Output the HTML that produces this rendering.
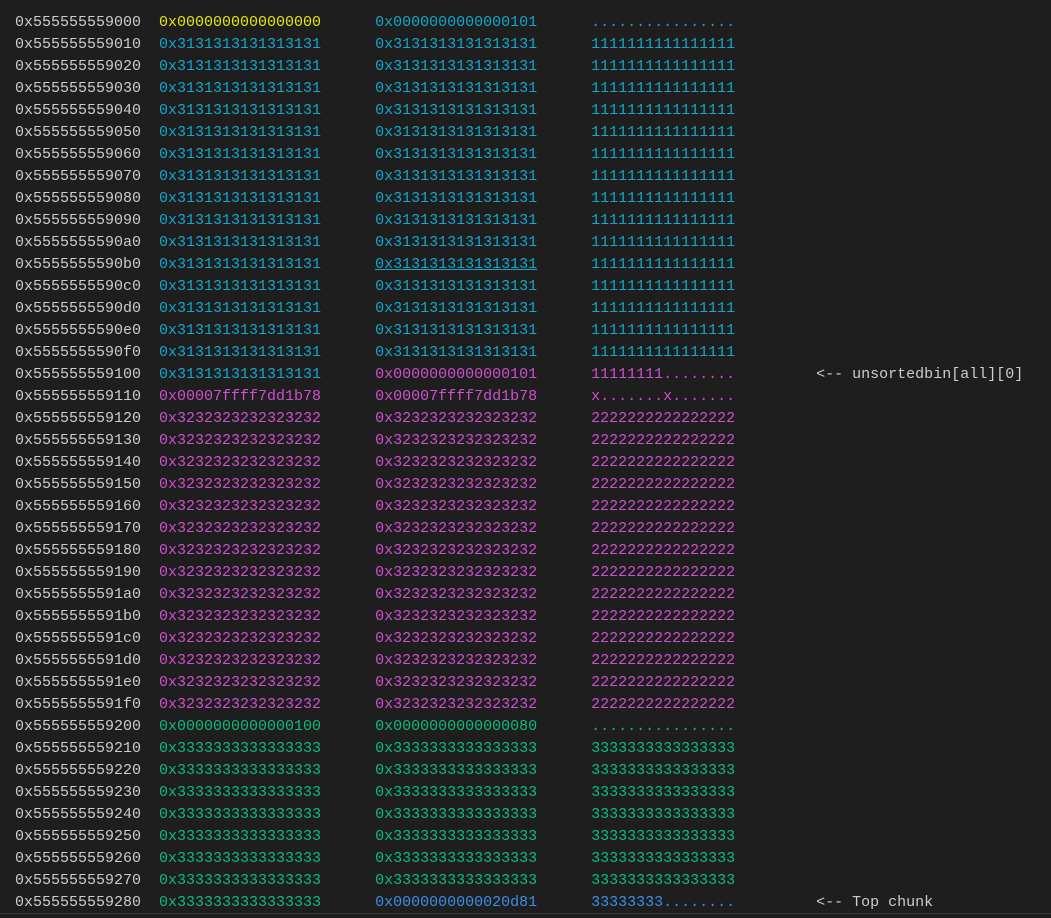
<!DOCTYPE html>
<html><head><meta charset="utf-8"><style>
html,body{margin:0;padding:0;background:#1e1e1e;width:1051px;height:918px;overflow:hidden}
pre{margin:0;position:absolute;left:15px;top:12px;font-family:"Liberation Mono",monospace;font-size:15px;line-height:22px;color:#cccccc;white-space:pre}
.y{color:#e5e510}.c{color:#11a8cd}.m{color:#d04fd0}.g{color:#0dbc79}.b{color:#3b8eea}.u{text-decoration:underline}
.line{position:absolute;left:0;top:913px;width:1051px;height:1px;background:#3a3a3a}
</style></head><body>
<pre>0x555555559000  <span class="y">0x0000000000000000</span>      <span class="c">0x0000000000000101</span>      <span class="c">................</span>
0x555555559010  <span class="c">0x3131313131313131</span>      <span class="c">0x3131313131313131</span>      <span class="c">1111111111111111</span>
0x555555559020  <span class="c">0x3131313131313131</span>      <span class="c">0x3131313131313131</span>      <span class="c">1111111111111111</span>
0x555555559030  <span class="c">0x3131313131313131</span>      <span class="c">0x3131313131313131</span>      <span class="c">1111111111111111</span>
0x555555559040  <span class="c">0x3131313131313131</span>      <span class="c">0x3131313131313131</span>      <span class="c">1111111111111111</span>
0x555555559050  <span class="c">0x3131313131313131</span>      <span class="c">0x3131313131313131</span>      <span class="c">1111111111111111</span>
0x555555559060  <span class="c">0x3131313131313131</span>      <span class="c">0x3131313131313131</span>      <span class="c">1111111111111111</span>
0x555555559070  <span class="c">0x3131313131313131</span>      <span class="c">0x3131313131313131</span>      <span class="c">1111111111111111</span>
0x555555559080  <span class="c">0x3131313131313131</span>      <span class="c">0x3131313131313131</span>      <span class="c">1111111111111111</span>
0x555555559090  <span class="c">0x3131313131313131</span>      <span class="c">0x3131313131313131</span>      <span class="c">1111111111111111</span>
0x5555555590a0  <span class="c">0x3131313131313131</span>      <span class="c">0x3131313131313131</span>      <span class="c">1111111111111111</span>
0x5555555590b0  <span class="c">0x3131313131313131</span>      <span class="c u">0x3131313131313131</span>      <span class="c">1111111111111111</span>
0x5555555590c0  <span class="c">0x3131313131313131</span>      <span class="c">0x3131313131313131</span>      <span class="c">1111111111111111</span>
0x5555555590d0  <span class="c">0x3131313131313131</span>      <span class="c">0x3131313131313131</span>      <span class="c">1111111111111111</span>
0x5555555590e0  <span class="c">0x3131313131313131</span>      <span class="c">0x3131313131313131</span>      <span class="c">1111111111111111</span>
0x5555555590f0  <span class="c">0x3131313131313131</span>      <span class="c">0x3131313131313131</span>      <span class="c">1111111111111111</span>
0x555555559100  <span class="c">0x3131313131313131</span>      <span class="m">0x0000000000000101</span>      <span class="m">11111111........</span>         &lt;-- unsortedbin[all][0]
0x555555559110  <span class="m">0x00007ffff7dd1b78</span>      <span class="m">0x00007ffff7dd1b78</span>      <span class="m">x.......x.......</span>
0x555555559120  <span class="m">0x3232323232323232</span>      <span class="m">0x3232323232323232</span>      <span class="m">2222222222222222</span>
0x555555559130  <span class="m">0x3232323232323232</span>      <span class="m">0x3232323232323232</span>      <span class="m">2222222222222222</span>
0x555555559140  <span class="m">0x3232323232323232</span>      <span class="m">0x3232323232323232</span>      <span class="m">2222222222222222</span>
0x555555559150  <span class="m">0x3232323232323232</span>      <span class="m">0x3232323232323232</span>      <span class="m">2222222222222222</span>
0x555555559160  <span class="m">0x3232323232323232</span>      <span class="m">0x3232323232323232</span>      <span class="m">2222222222222222</span>
0x555555559170  <span class="m">0x3232323232323232</span>      <span class="m">0x3232323232323232</span>      <span class="m">2222222222222222</span>
0x555555559180  <span class="m">0x3232323232323232</span>      <span class="m">0x3232323232323232</span>      <span class="m">2222222222222222</span>
0x555555559190  <span class="m">0x3232323232323232</span>      <span class="m">0x3232323232323232</span>      <span class="m">2222222222222222</span>
0x5555555591a0  <span class="m">0x3232323232323232</span>      <span class="m">0x3232323232323232</span>      <span class="m">2222222222222222</span>
0x5555555591b0  <span class="m">0x3232323232323232</span>      <span class="m">0x3232323232323232</span>      <span class="m">2222222222222222</span>
0x5555555591c0  <span class="m">0x3232323232323232</span>      <span class="m">0x3232323232323232</span>      <span class="m">2222222222222222</span>
0x5555555591d0  <span class="m">0x3232323232323232</span>      <span class="m">0x3232323232323232</span>      <span class="m">2222222222222222</span>
0x5555555591e0  <span class="m">0x3232323232323232</span>      <span class="m">0x3232323232323232</span>      <span class="m">2222222222222222</span>
0x5555555591f0  <span class="m">0x3232323232323232</span>      <span class="m">0x3232323232323232</span>      <span class="m">2222222222222222</span>
0x555555559200  <span class="g">0x0000000000000100</span>      <span class="g">0x0000000000000080</span>      <span class="g">................</span>
0x555555559210  <span class="g">0x3333333333333333</span>      <span class="g">0x3333333333333333</span>      <span class="g">3333333333333333</span>
0x555555559220  <span class="g">0x3333333333333333</span>      <span class="g">0x3333333333333333</span>      <span class="g">3333333333333333</span>
0x555555559230  <span class="g">0x3333333333333333</span>      <span class="g">0x3333333333333333</span>      <span class="g">3333333333333333</span>
0x555555559240  <span class="g">0x3333333333333333</span>      <span class="g">0x3333333333333333</span>      <span class="g">3333333333333333</span>
0x555555559250  <span class="g">0x3333333333333333</span>      <span class="g">0x3333333333333333</span>      <span class="g">3333333333333333</span>
0x555555559260  <span class="g">0x3333333333333333</span>      <span class="g">0x3333333333333333</span>      <span class="g">3333333333333333</span>
0x555555559270  <span class="g">0x3333333333333333</span>      <span class="g">0x3333333333333333</span>      <span class="g">3333333333333333</span>
0x555555559280  <span class="g">0x3333333333333333</span>      <span class="b">0x0000000000020d81</span>      <span class="b">33333333........</span>         &lt;-- Top chunk</pre>
<div class="line"></div>
</body></html>
